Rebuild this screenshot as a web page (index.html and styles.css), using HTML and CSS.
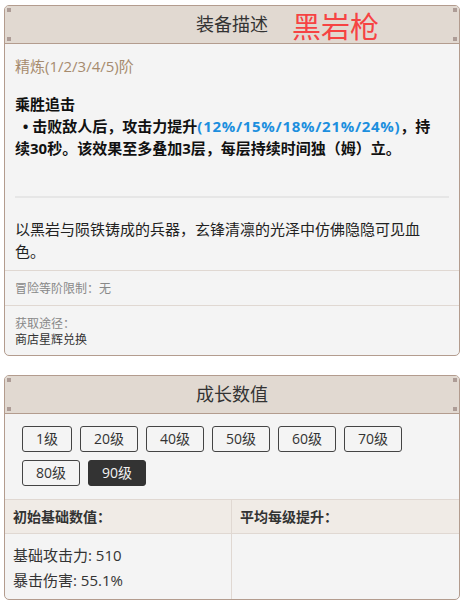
FILE: index.html
```html
<!DOCTYPE html>
<html lang="zh-CN">
<head>
  <meta charset="UTF-8" />
  <title>黑岩枪</title>
  <link rel="stylesheet" href="styles.css">
</head>
<body>
  <div class="card">
    <div class="card-head">
      <span class="title">装备描述<span class="weapon-name">黑岩枪</span></span>
    </div>
    <div class="section desc-main">
      <div class="refine">精炼(1/2/3/4/5)阶</div>
      <div class="effect">
        <div>乘胜追击</div>
        <div>&nbsp;&nbsp;• 击败敌人后，攻击力提升<span class="hl">(12%/15%/18%/21%/24%)</span>，持续30秒。该效果至多叠加3层，每层持续时间独（姆）立。</div>
      </div>
      <div class="split"></div>
      <div class="story">以黑岩与陨铁铸成的兵器，玄锋清凛的光泽中仿佛隐隐可见血色。</div>
    </div>
    <div class="section meta">冒险等阶限制：无</div>
    <div class="section source">
      <div class="meta-label">获取途径：</div>
      <div>商店星辉兑换</div>
    </div>
  </div>

  <div class="card">
    <div class="card-head">
      <span class="title">成长数值</span>
    </div>
    <div class="levels">
      <button class="lv">1级</button>
      <button class="lv">20级</button>
      <button class="lv">40级</button>
      <button class="lv">50级</button>
      <button class="lv">60级</button>
      <button class="lv">70级</button>
      <button class="lv">80级</button>
      <button class="lv active">90级</button>
    </div>
    <div class="stats">
      <div class="stats-head">初始基础数值：</div>
      <div class="stats-head">平均每级提升：</div>
      <div class="stats-cell">
        <div>基础攻击力: 510</div>
        <div>暴击伤害: 55.1%</div>
      </div>
      <div class="stats-cell"></div>
    </div>
  </div>
</body>
</html>
```

FILE: styles.css
```css
body {
  font-family: "Open Sans", "Noto Sans CJK SC", sans-serif;
  margin: 0;
  padding: 5px 6px 0 4px;
  background-color: #fff;
  color: #222;
}

.card {
  width: 456px;
  box-sizing: border-box;
  border: 1px solid #b39c8e;
  border-radius: 5px;
  background-color: #f4f4f4;
  overflow: hidden;
  margin-bottom: 19px;
}

.card-head {
  position: relative;
  height: 37px;
  background-color: #e1d9d1;
  border-bottom: 1px solid #b39c8e;
  text-align: center;
}

.card-head::before,
.card-head::after {
  content: "";
  position: absolute;
  left: 2px;
  right: 2px;
  height: 4px;
  background:
    linear-gradient(#ad9c96, #ad9c96) left / 4px 4px no-repeat,
    linear-gradient(#ad9c96, #ad9c96) right / 4px 4px no-repeat;
}

.card-head::before {
  top: 2px;
}

.card-head::after {
  bottom: 2px;
}

.title {
  position: relative;
  font-size: 18px;
  line-height: 37px;
  color: #333;
}

.weapon-name {
  position: absolute;
  left: calc(100% + 24px);
  top: -4px;
  font-size: 29px;
  line-height: 37px;
  color: #f64343;
  white-space: nowrap;
}

.section {
  border-bottom: 1px solid #e0d8d2;
}

.section:last-child {
  border-bottom: none;
}

.desc-main {
  padding: 11px 10px 8px 10px;
  font-size: 15px;
  line-height: 22px;
}

.refine {
  color: #a68b6e;
}

.effect {
  margin-top: 16px;
  margin-right: 12px;
  font-weight: bold;
  color: #111;
}

.hl {
  color: #1c8fde;
  letter-spacing: 0.7px;
}

.split {
  height: 2px;
  background-color: #e6e6e6;
  margin-top: 37px;
}

.story {
  margin-top: 20px;
  margin-right: 15px;
  color: #222;
}

.meta {
  padding: 9px 10px 7px 10px;
  font-size: 12px;
  line-height: 18px;
  color: #888;
}

.source {
  padding: 10px 10px 7px 10px;
  font-size: 12px;
  line-height: 16px;
  color: #333;
}

.meta-label {
  color: #888;
}

.levels {
  display: flex;
  flex-wrap: wrap;
  gap: 8px 8px;
  padding: 12px 17px 13px 17px;
}

.lv {
  font-family: inherit;
  font-size: 14px;
  line-height: 24px;
  padding: 0 13px;
  background-color: transparent;
  color: #333;
  border: 1px solid #444;
  border-radius: 3px;
}

.lv.active {
  background-color: #333;
  border-color: #333;
  color: #f2f2f2;
}

.stats {
  display: grid;
  grid-template-columns: 1fr 1fr;
  border-top: 1px solid #e0d8d2;
}

.stats-head {
  background-color: #f0ebe6;
  padding: 0 8px;
  height: 33px;
  line-height: 33px;
  font-size: 14px;
  font-weight: bold;
  color: #333;
  border-bottom: 1px solid #e0d8d2;
}

.stats-cell {
  padding: 9px 8px 6px 8px;
  font-size: 15px;
  line-height: 25px;
  color: #333;
}

.stats-head:first-child,
.stats-cell:nth-child(3) {
  border-right: 1px solid #e0d8d2;
}
```
